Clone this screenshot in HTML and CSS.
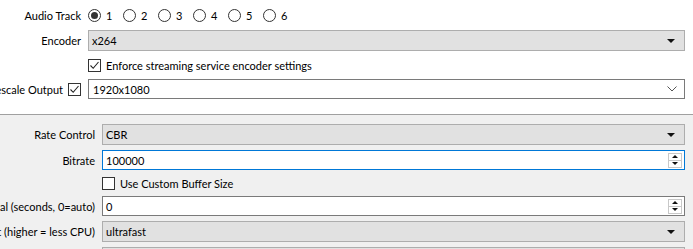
FILE: index.html
```html
<!DOCTYPE html>
<html lang="en">
<head>
<meta charset="utf-8">
<title>Output Settings</title>
<link rel="stylesheet" href="styles.css">
</head>
<body>
    <!-- stream section (white) -->
    <div class="section top">
        <div class="label">Audio Track</div>
        <div class="radios">
            <span class="radio on"></span><span class="rlabel">1</span>
            <span class="radio"></span><span class="rlabel">2</span>
            <span class="radio"></span><span class="rlabel">3</span>
            <span class="radio"></span><span class="rlabel">4</span>
            <span class="radio"></span><span class="rlabel">5</span>
            <span class="radio"></span><span class="rlabel">6</span>
        </div>

        <div class="label">Encoder</div>
        <div class="field combo">x264<span class="arrow"></span></div>

        <div class="label"></div>
        <div class="check-row">
            <span class="check"><svg width="11" height="11" viewBox="0 0 11 11"><path d="M1.5 5.5 L4.2 8.3 L9.5 2" fill="none" stroke="#222" stroke-width="1.1"/></svg></span>
            Enforce streaming service encoder settings
        </div>

        <div class="label">Rescale Output <span class="check small-gap"><svg width="11" height="11" viewBox="0 0 11 11"><path d="M1.5 5.5 L4.2 8.3 L9.5 2" fill="none" stroke="#222" stroke-width="1.1"/></svg></span></div>
        <div class="field edit">1920x1080<svg class="chevron" width="10" height="6" viewBox="0 0 10 6"><path d="M0.5 0.5 L5 5 L9.5 0.5" fill="none" stroke="#555" stroke-width="1"/></svg></div>
    </div>

    <!-- encoder settings (grey) -->
    <div class="section bottom">
        <div class="label">Rate Control</div>
        <div class="field combo">CBR<span class="arrow"></span></div>

        <div class="label">Bitrate</div>
        <div class="field spin focus">100000
            <div class="spinner"><span class="up"></span><span class="down"></span></div>
        </div>

        <div class="label"></div>
        <div class="check-row">
            <span class="check"></span>
            Use Custom Buffer Size
        </div>

        <div class="label">Keyframe Interval (seconds, 0=auto)</div>
        <div class="field spin">0
            <div class="spinner"><span class="up"></span><span class="down"></span></div>
        </div>

        <div class="label">CPU Usage Preset (higher = less CPU)</div>
        <div class="field combo">ultrafast<span class="arrow"></span></div>

        <div class="label">Profile</div>
        <div class="field combo">(None)<span class="arrow"></span></div>
    </div>
</body>
</html>
```

FILE: styles.css
```css
html, body {
    margin: 0;
    padding: 0;
    height: 249px;
    overflow: hidden;
    background: #f0f0f0;
    font-family: Lato, "Liberation Sans", sans-serif;
    font-size: 11px;
    color: #000;
}

.section {
    display: grid;
    row-gap: 6px;
    padding-right: 8px;
}

.top {
    background: #fff;
    grid-template-columns: 81px 1fr;
    grid-template-rows: 18px 21px 16px 20px;
    column-gap: 7px;
    padding-top: 6px;
    padding-bottom: 15px;
    border-bottom: 1px solid #a0a0a0;
}

.bottom {
    grid-template-columns: 95px 1fr;
    grid-template-rows: 21px 20px 16px 20px 21px 21px;
    column-gap: 7px;
    row-gap: 5px;
    padding-top: 9px;
}

.label {
    display: flex;
    align-items: center;
    justify-content: flex-end;
    white-space: nowrap;
    min-width: 0;
}

.radios {
    display: flex;
    align-items: center;
}
.radio {
    width: 11px;
    height: 11px;
    border: 1px solid #333;
    border-radius: 50%;
    background: #fff;
    display: flex;
    align-items: center;
    justify-content: center;
}
.radio.on::after {
    content: "";
    width: 7px;
    height: 7px;
    border-radius: 50%;
    background: #333;
}
.rlabel {
    margin-left: 5px;
    margin-right: 11px;
    width: 6px;
}

.check {
    width: 11px;
    height: 11px;
    border: 1px solid #333;
    background: #fff;
    display: inline-flex;
    align-items: center;
    justify-content: center;
    flex: none;
    margin-right: 5px;
}
.check.small-gap {
    margin-left: 5px;
    margin-right: 0;
}

.check-row {
    display: flex;
    align-items: center;
    white-space: nowrap;
}

.field {
    display: flex;
    align-items: center;
    position: relative;
    padding: 0 3px;
    border: 1px solid #7a7a7a;
    background: #fff;
    white-space: nowrap;
}
.field.combo {
    background: #e1e1e1;
    border-color: #adadad;
}
.field.focus {
    border-color: #0078d7;
}
.field.edit {
    padding-left: 4px;
}

.arrow {
    margin-left: auto;
    margin-right: 6px;
    width: 0;
    height: 0;
    border-left: 4px solid transparent;
    border-right: 4px solid transparent;
    border-top: 4px solid #111;
}

.chevron {
    margin-left: auto;
    margin-right: 4px;
}

.spinner {
    margin-left: auto;
    display: flex;
    flex-direction: column;
    width: 14px;
    height: 15px;
    border: 1px solid #c8c8c8;
    box-sizing: border-box;
    margin-right: -1px;
}
.spinner span {
    flex: 1;
    display: flex;
    align-items: center;
    justify-content: center;
}
.spinner .up {
    border-bottom: 1px solid #c8c8c8;
}
.spinner .up::after {
    content: "";
    border-left: 3px solid transparent;
    border-right: 3px solid transparent;
    border-bottom: 3px solid #111;
}
.spinner .down::after {
    content: "";
    border-left: 3px solid transparent;
    border-right: 3px solid transparent;
    border-top: 3px solid #111;
}
```
